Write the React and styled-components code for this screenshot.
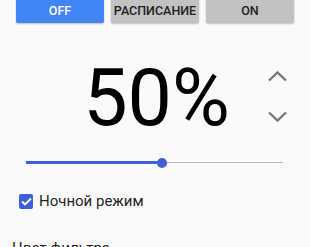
import React, { useState } from "react";
import styled, { createGlobalStyle } from "styled-components";

const Global = createGlobalStyle`
  html, body {
    margin: 0;
    background: #fafafa;
    font-family: Roboto, "Noto Sans", sans-serif;
    overflow: hidden;
  }
`;

const Page = styled.div`
  width: 310px;
  height: 247px;
  display: flex;
  flex-direction: column;
  background: #fafafa;
`;

const ModeBar = styled.div`
  display: flex;
  gap: 7px;
  padding: 0 16px;
  margin-top: -3px;
`;

const ModeButton = styled.button`
  flex: 1;
  height: 26px;
  border: none;
  border-radius: 2px;
  padding: 0;
  font-family: Roboto, sans-serif;
  font-size: 12.5px;
  font-weight: 500;
  background: ${({ $active }) => ($active ? "#4285f4" : "#c2c2c2")};
  color: ${({ $active }) => ($active ? "#ffffff" : "#212121")};
  box-shadow: 0 1px 2px rgba(0, 0, 0, 0.25);
`;

const ValueRow = styled.div`
  display: grid;
  grid-template-columns: 1fr auto 1fr;
  align-items: center;
  margin-top: 37px;
  height: 76px;
`;

const Value = styled.div`
  grid-column: 2;
  font-size: 79px;
  line-height: 76px;
  color: #000;
  padding-left: 3px;
`;

const Steppers = styled.div`
  grid-column: 3;
  justify-self: end;
  display: flex;
  flex-direction: column;
  gap: 29px;
  padding-right: 22px;
  margin-top: -4px;
`;

const StepButton = styled.button`
  border: none;
  background: none;
  padding: 0;
  width: 21px;
  height: 11px;
  display: flex;
`;

const Chevron = ({ down }) => (
  <svg width="21" height="11" viewBox="0 0 21 11">
    <polyline
      points={down ? "2,1.5 10.5,9.5 19,1.5" : "2,9.5 10.5,1.5 19,9.5"}
      fill="none"
      stroke="#767676"
      strokeWidth="2.4"
    />
  </svg>
);

const SliderWrap = styled.div`
  position: relative;
  margin: 22px 27px 0 26px;
  height: 10px;
`;

const Track = styled.div`
  position: absolute;
  left: 0;
  right: 0;
  top: 4px;
  height: 1px;
  background: #b9b9b9;
`;

const Fill = styled.div`
  position: absolute;
  left: 0;
  top: 3px;
  height: 3px;
  background: #3f5fd8;
`;

const Thumb = styled.div`
  position: absolute;
  top: 0;
  width: 10px;
  height: 10px;
  margin-left: -5px;
  border-radius: 50%;
  background: #3f5fd8;
`;

const CheckRow = styled.label`
  display: flex;
  align-items: center;
  gap: 6px;
  margin-top: 34px;
  padding-left: 19px;
  font-size: 15px;
  color: #1f1f1f;
`;

const Box = styled.span`
  width: 14px;
  height: 15px;
  border-radius: 2px;
  background: #3f5fd8;
  display: flex;
  align-items: center;
  justify-content: center;
`;

const Divider = styled.div`
  margin-top: 18px;
  height: 1px;
  background: #e6e6e6;
`;

const SectionTitle = styled.div`
  padding: 11px 12px 0;
  font-size: 15px;
  color: #1f1f1f;
`;

export default function App() {
  const [mode, setMode] = useState("OFF");
  const [value] = useState(50);
  const pct = 0.53;
  return (
    <Page>
      <Global />
      <ModeBar>
        {["OFF", "РАСПИСАНИЕ", "ON"].map((m) => (
          <ModeButton key={m} $active={mode === m} onClick={() => setMode(m)}>
            {m}
          </ModeButton>
        ))}
      </ModeBar>
      <ValueRow>
        <Value>{value}%</Value>
        <Steppers>
          <StepButton>
            <Chevron />
          </StepButton>
          <StepButton>
            <Chevron down />
          </StepButton>
        </Steppers>
      </ValueRow>
      <SliderWrap>
        <Track />
        <Fill style={{ width: `${pct * 100}%` }} />
        <Thumb style={{ left: `${pct * 100}%` }} />
      </SliderWrap>
      <CheckRow>
        <Box>
          <svg width="11" height="9" viewBox="0 0 11 9">
            <polyline points="1,4.5 4,7.5 10,1.5" fill="none" stroke="#fff" strokeWidth="1.8" />
          </svg>
        </Box>
        Ночной режим
      </CheckRow>
      <Divider />
      <SectionTitle>Цвет фильтра</SectionTitle>
    </Page>
  );
}
